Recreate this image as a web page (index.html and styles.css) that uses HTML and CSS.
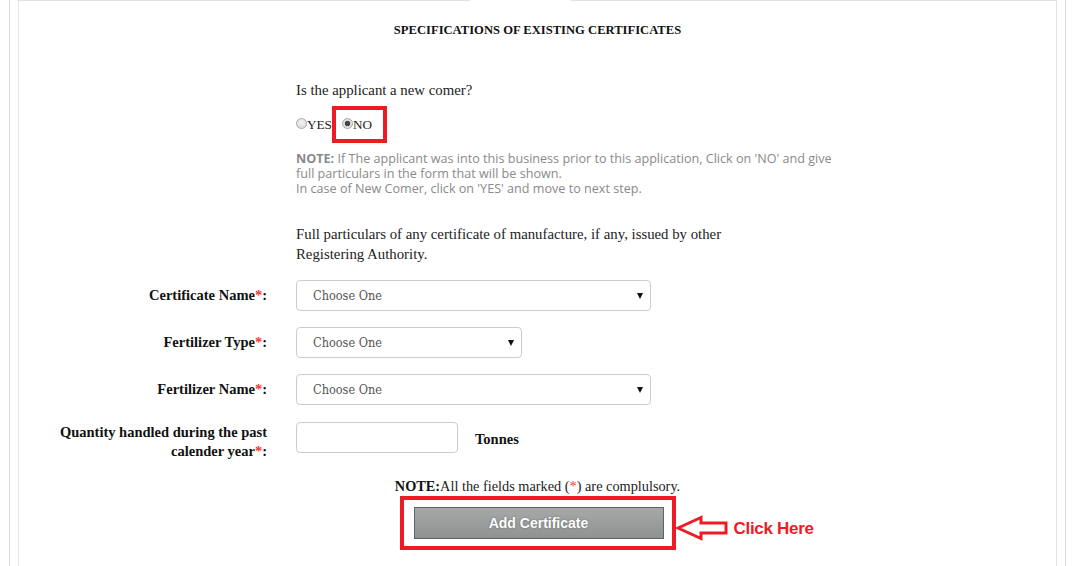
FILE: index.html
```html
<!DOCTYPE html>
<html lang="en">
<head>
<meta charset="utf-8">
<title>Specifications of Existing Certificates</title>
<link rel="stylesheet" href="styles.css">
</head>
<body>
<div class="page">
  <div class="panel">
    <h2 class="title">SPECIFICATIONS OF EXISTING CERTIFICATES</h2>

    <div class="intro">
      <p class="question">Is the applicant a new comer?</p>
      <div class="radios">
        <label class="radio"><input type="radio" name="newcomer" value="yes"><span>YES</span></label>
        <label class="radio radio-marked"><input type="radio" name="newcomer" value="no" checked><span>NO</span></label>
      </div>
      <p class="note"><b>NOTE:</b> If The applicant was into this business prior to this application, Click on 'NO' and give<br>full particulars in the form that will be shown.<br>In case of New Comer, click on 'YES' and move to next step.</p>
      <p class="particulars">Full particulars of any certificate of manufacture, if any, issued by other<br>Registering Authority.</p>
    </div>

    <div class="form-grid">
      <label class="field-label">Certificate Name<span class="req">*</span>:</label>
      <div class="field"><span class="select-wrap wide"><select><option>Choose One</option></select></span></div>

      <label class="field-label">Fertilizer Type<span class="req">*</span>:</label>
      <div class="field"><span class="select-wrap narrow"><select><option>Choose One</option></select></span></div>

      <label class="field-label">Fertilizer Name<span class="req">*</span>:</label>
      <div class="field"><span class="select-wrap wide"><select><option>Choose One</option></select></span></div>

      <label class="field-label two-line">Quantity handled during the past<br>calender year<span class="req">*</span>:</label>
      <div class="field field-top"><input class="qty" type="text"><span class="unit">Tonnes</span></div>
    </div>

    <p class="mandatory"><b>NOTE:</b>All the fields marked (<span class="req">*</span>) are complulsory.</p>

    <div class="action">
      <div class="highlight">
        <button class="btn" type="button">Add Certificate</button>
        <div class="callout">
          <svg class="arrow" width="54" height="26" viewBox="0 0 54 26"><polygon points="3,13 26,2.5 26,8 51,8 51,18 26,18 26,23.5" fill="none" stroke="#ed1c24" stroke-width="3" stroke-linejoin="miter"/></svg>
          <span class="callout-text">Click Here</span>
        </div>
      </div>
    </div>
  </div>
</div>
</body>
</html>
```

FILE: styles.css
```css
* { box-sizing: border-box; }
html, body { margin: 0; padding: 0; background: #fff; overflow: hidden; }
body { font-family: "Liberation Serif", "Times New Roman", serif; color: #222; }

.page {
  margin: 0 9px;
  height: 566px;
  padding: 0 8px;
  border-left: 1px solid #dcdcdc;
  border-right: 1px solid #dcdcdc;
}
.panel {
  position: relative;
  height: 100%;
  border: 1px solid #e2e2e2;
  border-bottom: none;
}
.panel::before {
  content: "";
  position: absolute;
  top: -1px;
  left: 451px;
  width: 101px;
  height: 1px;
  background: #fff;
}

.title {
  margin: 0;
  padding-top: 21px;
  text-align: center;
  font-size: 12.6px;
  line-height: 16px;
  font-weight: bold;
  color: #111;
}

.intro { padding-left: 277px; }
.question {
  margin: 42px 0 0;
  font-size: 14.8px;
  line-height: 20px;
}
.radios {
  display: flex;
  align-items: center;
  height: 37px;
  margin-top: 6px;
  font-size: 13.2px;
}
.radio { display: flex; align-items: center; cursor: pointer; }
.radio input {
  appearance: none;
  -webkit-appearance: none;
  margin: 0;
  width: 11px;
  height: 11px;
  border-radius: 50%;
  border: 1px solid #a9a9a9;
  background: radial-gradient(circle at 50% 40%, #f4f4f4, #d6d6d6);
  position: relative;
  top: -1px;
}
.radio input:checked {
  background: radial-gradient(circle, #444 0 2.4px, #d9d9d9 3px, #eaeaea 100%);
}
.radio-marked {
  height: 37px;
  border: 4px solid #ed1c24;
  padding: 0 11px 0 6px;
}
.note {
  margin: 8px 0 0;
  font-family: "Open Sans", "Liberation Sans", sans-serif;
  font-size: 12.6px;
  line-height: 15px;
  color: #8a8a8a;
}
.note b { color: #8a8a8a; }
.particulars {
  margin: 28px 0 0;
  font-size: 14.8px;
  line-height: 20px;
}

.form-grid {
  display: grid;
  grid-template-columns: 248px 1fr;
  column-gap: 29px;
  row-gap: 16px;
  align-items: center;
  margin-top: 16px;
}
.field-label {
  text-align: right;
  font-weight: bold;
  font-size: 14.5px;
  line-height: 19px;
  color: #111;
}
.field-label.two-line { align-self: start; padding-top: 2px; }
.req { color: #f33; font-weight: normal; }
.field-label .req { font-weight: bold; }
.field { display: flex; align-items: center; }
.field-top { align-self: start; margin-top: 1px; }

.select-wrap { position: relative; display: inline-block; }
.select-wrap.wide { width: 355px; }
.select-wrap.narrow { width: 226px; }
.select-wrap::after {
  content: "";
  position: absolute;
  right: 8px;
  top: 13px;
  border-left: 3.5px solid transparent;
  border-right: 3.5px solid transparent;
  border-top: 6px solid #111;
  pointer-events: none;
}
.select-wrap select {
  appearance: none;
  -webkit-appearance: none;
  width: 100%;
  height: 31px;
  border: 1px solid #ccc;
  border-radius: 4px;
  background: #fff;
  padding: 0 0 0 16px;
  font-family: "DejaVu Serif Condensed", "DejaVu Serif", serif;
  font-size: 12.6px;
  color: #555;
}
.qty {
  width: 162px;
  height: 31px;
  border: 1px solid #ccc;
  border-radius: 4px;
  background: #fff;
}
.unit {
  margin-left: 17px;
  font-weight: bold;
  font-size: 14.5px;
  color: #111;
  position: relative;
  top: 2px;
}

.mandatory {
  margin: 15px 0 0;
  text-align: center;
  font-size: 14.3px;
  line-height: 20px;
}
.mandatory b { color: #111; }

.action { display: flex; justify-content: center; }
.highlight {
  position: relative;
  border: 4px solid #ed1c24;
  padding: 7px 8px 7px 10px;
}
.btn {
  display: block;
  width: 250px;
  height: 32px;
  border: 1px solid #5f6463;
  background: linear-gradient(#a6a9a8, #8e9291);
  color: #fff;
  font-family: "Liberation Sans", Arial, sans-serif;
  font-weight: bold;
  font-size: 14px;
  text-shadow: 0 0 2px rgba(0,0,0,0.35);
  cursor: pointer;
}
.callout {
  position: absolute;
  left: 100%;
  top: 15px;
  margin-left: 3px;
  display: flex;
  align-items: center;
  white-space: nowrap;
}
.arrow { display: block; }
.callout-text {
  margin-left: 5px;
  position: relative;
  top: 1px;
  font-family: "Liberation Sans", Arial, sans-serif;
  font-weight: bold;
  font-size: 17px;
  color: #ed1c24;
  letter-spacing: -0.3px;
}
```
